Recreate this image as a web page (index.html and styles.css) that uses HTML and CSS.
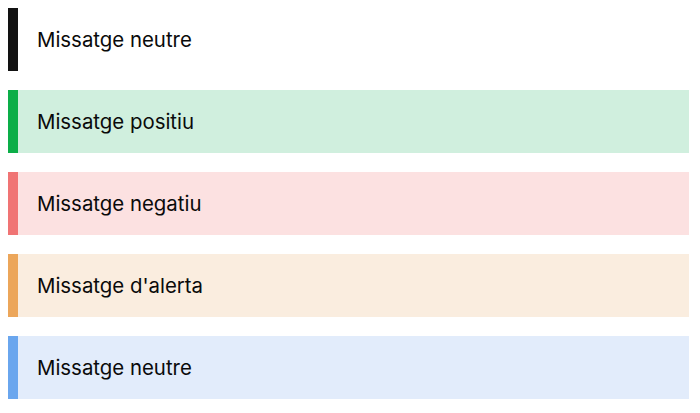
FILE: index.html
```html
<!DOCTYPE html>
<html lang="ca">
<head>
<meta charset="utf-8">
<link rel="stylesheet" href="styles.css">
</head>
<body>
<div class="list">
  <div class="msg msg-default">Missatge neutre</div>
  <div class="msg msg-positive">Missatge positiu</div>
  <div class="msg msg-negative">Missatge negatiu</div>
  <div class="msg msg-warning">Missatge d'alerta</div>
  <div class="msg msg-info">Missatge neutre</div>
</div>
</body>
</html>
```
FILE: styles.css
```css
html, body {
  margin: 0;
  background: #fff;
}
body {
  padding: 8px 11px 8px 8px;
  font-family: Inter, "Noto Sans", sans-serif;
}
.list {
  display: flex;
  flex-direction: column;
  gap: 19px;
}
.msg {
  height: 63px;
  box-sizing: border-box;
  display: flex;
  align-items: center;
  padding-left: 19px;
  border-left: 10px solid #111;
  font-size: 20.4px;
  color: #0a0a0a;
}
.msg-default { border-left-color: #121212; background: #fff; }
.msg-positive { border-left-color: #0cae48; background: #d0efde; }
.msg-negative { border-left-color: #f07474; background: #fce1e1; }
.msg-warning { border-left-color: #eca65a; background: #faeddf; }
.msg-info { border-left-color: #6aa6ee; background: #e2ecfb; }
```
